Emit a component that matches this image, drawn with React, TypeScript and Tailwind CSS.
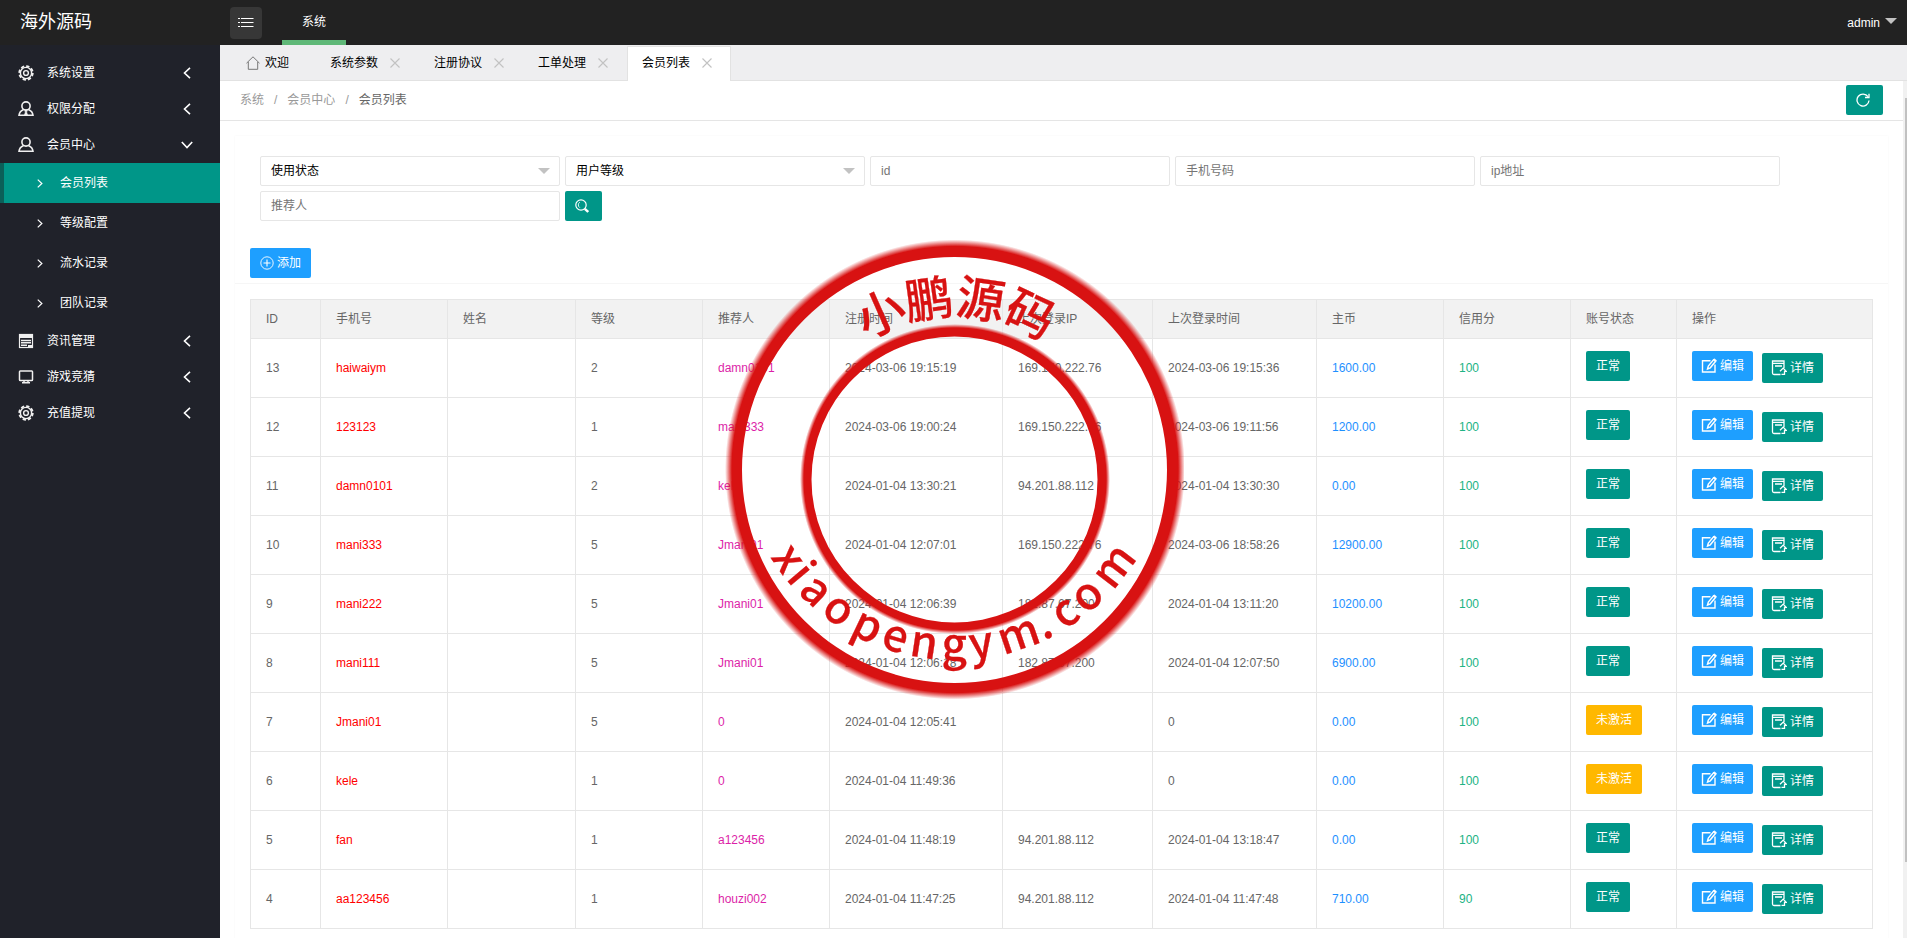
import React from 'react'

interface Member {
  id: number
  phone: string
  level: number
  referrer: string
  registeredAt: string
  lastIp: string
  lastLogin: string
  balance: string
  credit: number
  active: boolean
}

const members: Member[] = [
  { id: 13, phone: 'haiwaiym', level: 2, referrer: 'damn0101', registeredAt: '2024-03-06 19:15:19', lastIp: '169.150.222.76', lastLogin: '2024-03-06 19:15:36', balance: '1600.00', credit: 100, active: true },
  { id: 12, phone: '123123', level: 1, referrer: 'mani333', registeredAt: '2024-03-06 19:00:24', lastIp: '169.150.222.76', lastLogin: '2024-03-06 19:11:56', balance: '1200.00', credit: 100, active: true },
  { id: 11, phone: 'damn0101', level: 2, referrer: 'kele', registeredAt: '2024-01-04 13:30:21', lastIp: '94.201.88.112', lastLogin: '2024-01-04 13:30:30', balance: '0.00', credit: 100, active: true },
  { id: 10, phone: 'mani333', level: 5, referrer: 'Jmani01', registeredAt: '2024-01-04 12:07:01', lastIp: '169.150.222.76', lastLogin: '2024-03-06 18:58:26', balance: '12900.00', credit: 100, active: true },
  { id: 9, phone: 'mani222', level: 5, referrer: 'Jmani01', registeredAt: '2024-01-04 12:06:39', lastIp: '182.87.67.200', lastLogin: '2024-01-04 13:11:20', balance: '10200.00', credit: 100, active: true },
  { id: 8, phone: 'mani111', level: 5, referrer: 'Jmani01', registeredAt: '2024-01-04 12:06:18', lastIp: '182.87.67.200', lastLogin: '2024-01-04 12:07:50', balance: '6900.00', credit: 100, active: true },
  { id: 7, phone: 'Jmani01', level: 5, referrer: '0', registeredAt: '2024-01-04 12:05:41', lastIp: '', lastLogin: '0', balance: '0.00', credit: 100, active: false },
  { id: 6, phone: 'kele', level: 1, referrer: '0', registeredAt: '2024-01-04 11:49:36', lastIp: '', lastLogin: '0', balance: '0.00', credit: 100, active: false },
  { id: 5, phone: 'fan', level: 1, referrer: 'a123456', registeredAt: '2024-01-04 11:48:19', lastIp: '94.201.88.112', lastLogin: '2024-01-04 13:18:47', balance: '0.00', credit: 100, active: true },
  { id: 4, phone: 'aa123456', level: 1, referrer: 'houzi002', registeredAt: '2024-01-04 11:47:25', lastIp: '94.201.88.112', lastLogin: '2024-01-04 11:47:48', balance: '710.00', credit: 90, active: true },
]

const columns = [
  { title: 'ID', width: 'w-[70px]' },
  { title: '手机号', width: 'w-[127px]' },
  { title: '姓名', width: 'w-[128px]' },
  { title: '等级', width: 'w-[127px]' },
  { title: '推荐人', width: 'w-[127px]' },
  { title: '注册时间', width: 'w-[173px]' },
  { title: '上次登录IP', width: 'w-[150px]' },
  { title: '上次登录时间', width: 'w-[164px]' },
  { title: '主币', width: 'w-[127px]' },
  { title: '信用分', width: 'w-[127px]' },
  { title: '账号状态', width: 'w-[106px]' },
  { title: '操作', width: 'w-[196px]' },
]

interface IconProps {
  className?: string
}

const GearIcon = ({ className }: IconProps) => (
  <svg viewBox="0 0 16 16" className={className} fill="none" stroke="currentColor" aria-hidden="true">
    <circle cx="8" cy="8" r="6.8" strokeWidth="1.8" strokeDasharray="3.3 2.04" />
    <circle cx="8" cy="8" r="5.6" strokeWidth="1.4" />
    <circle cx="8" cy="8" r="2.4" strokeWidth="1.4" />
  </svg>
)

const UserIcon = ({ className }: IconProps) => (
  <svg viewBox="0 0 16 16" className={className} fill="none" stroke="currentColor" strokeWidth="1.6" aria-hidden="true">
    <circle cx="8" cy="5" r="4.1" />
    <path d="M5.6 8.4C3 9.5 1.3 11.5 1 14.300h14c-.3-2.800-2-4.800-4.600-5.900" />
  </svg>
)

const AdminIcon = ({ className }: IconProps) => (
  <svg viewBox="0 0 16 16" className={className} fill="none" stroke="currentColor" strokeWidth="1.6" aria-hidden="true">
    <circle cx="8" cy="5" r="4.1" />
    <path d="M5.6 8.4C3 9.5 1.3 11.5 1 14.300h14c-.3-2.800-2-4.800-4.600-5.900" />
    <path d="M8 8.5l-1.4 1.3.8 1-.9 3.2h3l-.9-3.2.8-1z" fill="currentColor" strokeWidth=".6" />
  </svg>
)

const NewsIcon = ({ className }: IconProps) => (
  <svg viewBox="0 0 16 16" className={className} fill="none" stroke="currentColor" aria-hidden="true">
    <rect x="1.5" y="1.5" width="13" height="13" strokeWidth="1.2" />
    <path d="M1 3h14" strokeWidth="4" />
    <path d="M3 7.5h10M3 9.8h10M3 12.3h6" strokeWidth="1.4" />
    <path d="M10 12h4v2h-4z" fill="currentColor" stroke="none" />
  </svg>
)

const ScreenIcon = ({ className }: IconProps) => (
  <svg viewBox="0 0 16 16" className={className} fill="none" stroke="currentColor" strokeWidth="1.5" aria-hidden="true">
    <rect x="1.5" y="2" width="13" height="9.5" rx=".8" />
    <path d="M6 12v2M10 12v2M4 13.8h8" />
  </svg>
)

const HomeIcon = ({ className }: IconProps) => (
  <svg viewBox="0 0 14 14" className={className} fill="none" stroke="currentColor" aria-hidden="true">
    <path d="M.5 7.2L7 .8l6.5 6.4M2.3 6v7.3h9.4V6" />
  </svg>
)

const ListIcon = ({ className }: IconProps) => (
  <svg viewBox="0 0 16 12" className={className} fill="none" stroke="currentColor" strokeWidth="1.2" aria-hidden="true">
    <path d="M0 1.5h2M3 1.5h12.5M0 5.5h2M3 5.5h12.5M0 9.5h2M3 9.5h12.5" />
  </svg>
)

const CloseIcon = ({ className }: IconProps) => (
  <svg viewBox="0 0 10 10" className={className} fill="none" stroke="currentColor" strokeWidth="1.1" aria-hidden="true">
    <path d="M.5.5l9 9M9.5.5l-9 9" />
  </svg>
)

const CaretIcon = ({ className }: IconProps) => (
  <svg viewBox="0 0 12 6" className={className} fill="currentColor" aria-hidden="true">
    <path d="M0 0h12L6 6z" />
  </svg>
)

const ChevronIcon = ({ className }: IconProps) => (
  <svg viewBox="0 0 8 12" className={className} fill="none" stroke="currentColor" strokeWidth="1.6" aria-hidden="true">
    <path d="M7 .8L1.5 6 7 11.2" />
  </svg>
)

const RefreshIcon = ({ className }: IconProps) => (
  <svg viewBox="0 0 14 14" className={className} fill="none" stroke="currentColor" strokeWidth="1.3" aria-hidden="true">
    <path d="M12 3.7A6 6 0 1 0 13 7.5" />
    <path d="M13 .8V4.5H9" />
  </svg>
)

const SearchIcon = ({ className }: IconProps) => (
  <svg viewBox="0 0 14 14" className={className} fill="none" stroke="currentColor" aria-hidden="true">
    <circle cx="6" cy="6" r="5.2" strokeWidth="1.2" />
    <path d="M4.8 3.2a3.2 3.2 0 0 0 0 5.4" strokeWidth=".9" />
    <path d="M9.8 9.8l3.4 3.2" strokeWidth="2.4" />
  </svg>
)

const AddIcon = ({ className }: IconProps) => (
  <svg viewBox="0 0 14 14" className={className} fill="none" stroke="currentColor" aria-hidden="true">
    <circle cx="7" cy="7" r="6.2" strokeWidth=".9" />
    <path d="M3.5 7h7M7 3.5v7" strokeWidth="1.1" />
  </svg>
)

const EditIcon = ({ className }: IconProps) => (
  <svg viewBox="0 0 16 16" className={className} fill="none" stroke="currentColor" strokeWidth="1.4" aria-hidden="true">
    <path d="M9.5 2.7H1.5v11.3h12.5V6.5" />
    <path d="M6.5 11l.8-3L12.6 1.8l2 1.5L9.3 9.8z" />
    <path d="M12.3 2l2.2 1.7 1-1.3L13.3.8z" fill="currentColor" strokeWidth=".6" />
  </svg>
)

const DetailIcon = ({ className }: IconProps) => (
  <svg viewBox="0 0 16 16" className={className} fill="none" stroke="currentColor" strokeWidth="1.3" aria-hidden="true">
    <path d="M13 8V1H1.5v12q0 1.5 1.5 1.5h6.5" />
    <path d="M1.5 3.3H13M4 6h7" />
    <path d="M9 11.3l3.2-3.2 3 3.2h-1.7v3H10.5" />
  </svg>
)

const menus = [
  { label: '系统设置', icon: GearIcon },
  { label: '权限分配', icon: AdminIcon },
  { label: '会员中心', icon: UserIcon, children: ['会员列表', '等级配置', '流水记录', '团队记录'] },
  { label: '资讯管理', icon: NewsIcon },
  { label: '游戏竞猜', icon: ScreenIcon },
  { label: '充值提现', icon: GearIcon },
]

const tabs = ['系统参数', '注册协议', '工单处理', '会员列表']

const Header = () => (
  <header className="flex h-[45px] shrink-0 items-center bg-[#222] text-white">
    <div className="w-[220px] shrink-0 pl-5 text-lg leading-[45px]">海外源码</div>
    <button type="button" aria-label="菜单" className="ml-2.5 flex size-8 items-center justify-center rounded-sm bg-[#373737]">
      <ListIcon className="h-3 w-4" />
    </button>
    <nav className="ml-5 flex h-full border-b-[5px] border-[#5fb878] px-5">
      <a href="#system" className="leading-[44px]">系统</a>
    </nav>
    <button type="button" className="ml-auto mr-2.5 flex items-center gap-[5px] font-medium">
      admin
      <CaretIcon className="mb-1 h-1.5 w-3 text-[#c2c2c2]" />
    </button>
  </header>
)

const Sidebar = () => (
  <aside className="w-[220px] shrink-0 bg-[#20222a] pt-2.5 text-white">
    {menus.map(({ label, icon: Icon, children }) => (
      <div key={label}>
        <a href="#menu" className="flex h-9 items-center pl-[18px] pr-[29px]">
          <Icon className="size-4 text-[#f0f0f0]" />
          <span className="ml-[13px] flex-1">{label}</span>
          <ChevronIcon className={children ? 'h-3 w-2 -rotate-90' : 'h-3 w-2'} />
        </a>
        {children?.map((child, i) => (
          <a
            key={child}
            href="#child"
            className={`flex h-10 items-center border-l-4 pl-[33px] ${i === 0 ? 'border-[#0b5f58] bg-[#009688]' : 'border-transparent'}`}
          >
            <ChevronIcon className="h-[9px] w-1.5 rotate-180" />
            <span className="ml-[17px]">{child}</span>
          </a>
        ))}
      </div>
    ))}
  </aside>
)

const TabBar = () => (
  <div className="flex h-9 shrink-0 items-end border-b border-[#e2e2e2] bg-[#eeeef0] pl-[11px] text-black">
    <a href="#home" className="flex h-[35px] w-[84px] items-center gap-[5px] pl-[15px]">
      <HomeIcon className="size-3.5 text-[#777]" />
      欢迎
    </a>
    {tabs.map((tab) => {
      const current = tab === '会员列表'
      return (
        <div
          key={tab}
          className={`flex h-[35px] w-[104px] items-center justify-between border-x border-t pl-3.5 pr-[18px] ${
            current ? '-mb-px h-9 border-[#e2e2e2] bg-white pb-0.5' : 'border-transparent'
          }`}
        >
          <a href="#tab">{tab}</a>
          <button type="button" aria-label={`关闭${tab}`}>
            <CloseIcon className="size-2.5 text-[#c2c2c2]" />
          </button>
        </div>
      )
    })}
  </div>
)

const Breadcrumb = () => (
  <div className="flex h-10 items-center border-b border-[#e5e5e5] px-5 pb-0.5">
    <nav className="flex flex-1 gap-2.5 text-[#999]">
      <a href="#system">系统</a>
      <span>/</span>
      <a href="#center">会员中心</a>
      <span>/</span>
      <a href="#list" className="text-[#666]">会员列表</a>
    </nav>
    <button type="button" aria-label="刷新" className="flex h-[30px] w-[37px] items-center rounded-xs bg-[#009688] pl-2.5 text-white">
      <RefreshIcon className="size-3.5" />
    </button>
  </div>
)

const FilterSelect = ({ label }: { label: string }) => (
  <div className="relative h-[30px] w-[300px]">
    <select aria-label={label} className="h-full w-full appearance-none rounded-xs border border-[#e6e6e6] bg-white px-2.5 text-black">
      <option>{label}</option>
    </select>
    <CaretIcon className="pointer-events-none absolute right-2.5 top-3 h-1.5 w-3 text-[#c2c2c2]" />
  </div>
)

const FilterInput = ({ label }: { label: string }) => (
  <input
    type="text"
    aria-label={label}
    placeholder={label}
    className="h-[30px] w-[300px] rounded-xs border border-[#e6e6e6] bg-white px-2.5 placeholder:text-[#757575]"
  />
)

const MemberTable = () => (
  <table className="w-full table-fixed border-collapse text-left text-[#666]">
    <colgroup>
      {columns.map((col) => (
        <col key={col.title} className={col.width} />
      ))}
    </colgroup>
    <thead>
      <tr className="h-[39px] bg-[#f2f2f2]">
        {columns.map((col) => (
          <th key={col.title} className="border border-[#e6e6e6] px-[15px] font-normal">{col.title}</th>
        ))}
      </tr>
    </thead>
    <tbody>
      {members.map((m) => (
        <tr key={m.id} className="h-[59px]">
          <td className="border border-[#e6e6e6] px-[15px]">{m.id}</td>
          <td className="border border-[#e6e6e6] px-[15px] text-[#ff0000]">{m.phone}</td>
          <td className="border border-[#e6e6e6] px-[15px]"></td>
          <td className="border border-[#e6e6e6] px-[15px]">{m.level}</td>
          <td className="border border-[#e6e6e6] px-[15px] text-[#dc1fa8]">{m.referrer}</td>
          <td className="border border-[#e6e6e6] px-[15px]">{m.registeredAt}</td>
          <td className="border border-[#e6e6e6] px-[15px]">{m.lastIp}</td>
          <td className="border border-[#e6e6e6] px-[15px]">{m.lastLogin}</td>
          <td className="border border-[#e6e6e6] px-[15px] text-[#1e90ff]">{m.balance}</td>
          <td className="border border-[#e6e6e6] px-[15px] text-[#21b384]">{m.credit}</td>
          <td className="border border-[#e6e6e6] px-[15px] pt-3 align-top">
            <button type="button" className={`block h-[30px] rounded-xs px-2.5 text-white ${m.active ? 'bg-[#009688]' : 'bg-[#ffb800]'}`}>
              {m.active ? '正常' : '未激活'}
            </button>
          </td>
          <td className="border border-[#e6e6e6] px-[15px] pt-3 align-top">
            <div className="flex gap-[9px] text-white">
              <button type="button" className="flex h-[30px] w-[61px] items-center justify-center gap-[3px] rounded-xs bg-[#1e9fff]">
                <EditIcon className="size-4" />
                编辑
              </button>
              <button type="button" className="mt-0.5 flex h-[30px] w-[61px] items-center justify-center gap-[3px] rounded-xs bg-[#009688]">
                <DetailIcon className="size-4" />
                详情
              </button>
            </div>
          </td>
        </tr>
      ))}
    </tbody>
  </table>
)

interface RingTextProps {
  text: string
  angles: number[]
  // advance of each glyph, in em
  advances: number[]
  cx: number
  cy: number
  radius: number
  size: number
  inside?: boolean
}

// Sets each glyph on a circle while keeping the string in one text node
const RingText = ({ text, angles, advances, cx, cy, radius, size, inside }: RingTextProps) => {
  const glyphs = angles.map((deg, i) => {
    const a = (deg * Math.PI) / 180
    const turn = inside ? -a : a
    const half = (advances[i] * size) / 2
    const side = inside ? 1 : -1
    return {
      x: cx + radius * Math.sin(a) - half * Math.cos(turn),
      y: cy + side * radius * Math.cos(a) - half * Math.sin(turn),
      r: inside ? -deg : deg,
    }
  })
  return (
    <text
      x={glyphs.map((g) => g.x.toFixed(1)).join(' ')}
      y={glyphs.map((g) => g.y.toFixed(1)).join(' ')}
      rotate={glyphs.map((g) => g.r).join(' ')}
      fontSize={size}
      fill="#d81212"
      stroke="#d81212"
      strokeWidth=".3"
      className="font-['Noto_Sans_CJK_SC',sans-serif] font-medium"
    >
      {text}
    </text>
  )
}

const Stamp = () => (
  <div className="pointer-events-none fixed inset-0 flex items-center justify-center">
    <svg viewBox="0 0 460 460" className="size-[460px]">
      <defs>
        <radialGradient id="outer" gradientUnits="userSpaceOnUse" cx="231" cy="230.5" r="230">
          <stop offset=".97" stopColor="#d81212" />
          <stop offset="1" stopColor="#d81212" stopOpacity="0" />
        </radialGradient>
        <radialGradient id="inner" gradientUnits="userSpaceOnUse" cx="231" cy="240" r="155">
          <stop offset=".975" stopColor="#d81212" />
          <stop offset="1" stopColor="#d81212" stopOpacity="0" />
        </radialGradient>
      </defs>
      <path
        fill="url(#outer)"
        fillRule="evenodd"
        d="M1 230.5a230 230 0 1 0 460 0a230 230 0 1 0-460 0zM18 231a212.5 213 0 1 0 425 0a212.5 213 0 1 0-425 0z"
      />
      <path
        fill="url(#inner)"
        fillRule="evenodd"
        d="M76 240a155 155 0 1 0 310 0a155 155 0 1 0-310 0zM87.5 240.5a143 143 0 1 0 286 0a143 143 0 1 0-286 0z"
      />
      <RingText text="小鹏源码" angles={[-24, -8, 8.5, 25]} advances={[1, 1, 1, 1]} cx={230} cy={239} radius={163} size={48} />
      <RingText
        text="xiaopengym.com"
        angles={[-55.5, -50, -43.5, -35, -25.5, -17, -8.6, 0, 7.6, 18.7, 26.3, 33.7, 41.5, 52.8]}
        advances={[0.52, 0.28, 0.57, 0.61, 0.62, 0.56, 0.61, 0.57, 0.53, 0.93, 0.28, 0.52, 0.61, 0.93]}
        cx={230}
        cy={206}
        radius={215}
        size={44}
        inside
      />
    </svg>
  </div>
)

const App: React.FC = () => {
  return (
    <div className="flex h-screen flex-col overflow-hidden bg-white font-['Liberation_Sans','Noto_Sans_CJK_SC',sans-serif] text-xs">
      <Header />
      <div className="flex min-h-0 flex-1">
        <Sidebar />
        <main className="flex min-w-0 flex-1 flex-col">
          <TabBar />
          <div className="flex min-h-0 flex-1">
            <div className="min-w-0 flex-1 overflow-hidden">
              <Breadcrumb />
              {/* Member list card */}
              <section className="m-[15px] pt-5 pb-4 shadow-[0_0_2px_rgba(0,0,0,0.04)]">
                <form className="flex flex-wrap gap-[5px] px-[25px]">
                  <FilterSelect label="使用状态" />
                  <FilterSelect label="用户等级" />
                  <FilterInput label="id" />
                  <FilterInput label="手机号码" />
                  <FilterInput label="ip地址" />
                  <FilterInput label="推荐人" />
                  <button type="button" aria-label="搜索" className="flex h-[30px] w-[37px] items-center rounded-xs bg-[#009688] pl-2.5 text-white">
                    <SearchIcon className="size-3.5" />
                  </button>
                </form>
                <div className="mt-[27px] border-b border-[#f6f6f6] px-[15px] pb-[5px]">
                  <button type="button" className="flex h-[30px] w-[61px] items-center justify-center gap-[3px] rounded-xs bg-[#1e9fff] text-white">
                    <AddIcon className="size-3.5" />
                    添加
                  </button>
                </div>
                <div className="px-[15px] pt-[15px]">
                  <MemberTable />
                </div>
              </section>
            </div>
            {/* Scrollbar */}
            <div className="flex w-1 shrink-0 flex-col items-end bg-[#f1f1f1] pt-[17px]">
              <div className="h-[91%] w-0.5 bg-[#c1c1c1]" />
            </div>
          </div>
        </main>
      </div>
      <Stamp />
    </div>
  )
}

export default App
